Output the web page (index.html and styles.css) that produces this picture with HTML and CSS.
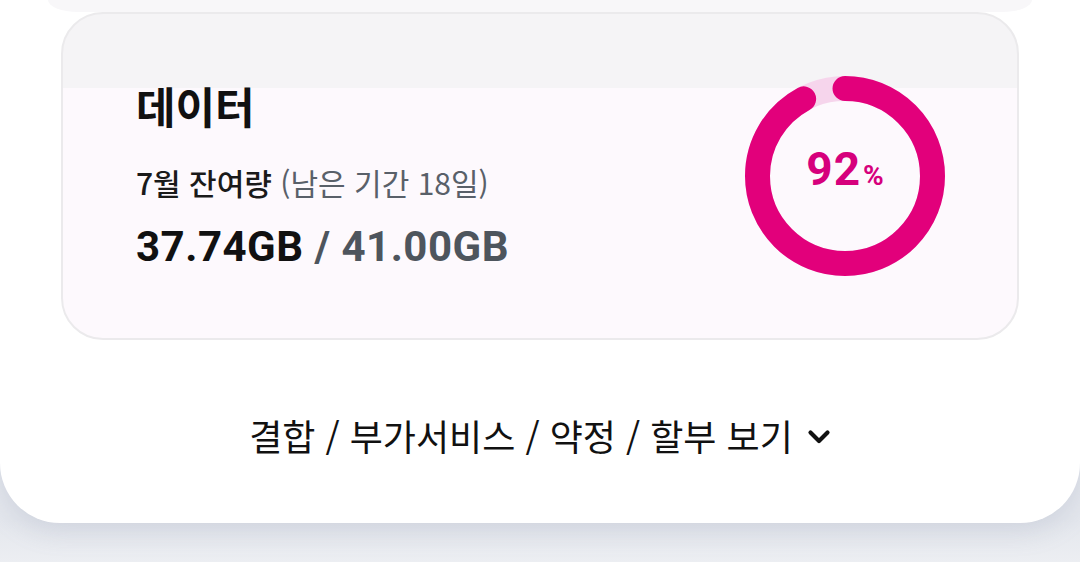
FILE: index.html
```html
<!DOCTYPE html>
<html lang="ko">
<head>
<meta charset="utf-8">
<title>데이터</title>
<link rel="stylesheet" href="styles.css">
</head>
<body>
  <div class="sheet">
    <div class="top-fade"></div>
    <section class="usage-card">
      <div class="usage-info">
        <h2 class="usage-title">데이터</h2>
        <p class="usage-sub"><span class="month">7월 잔여량</span> <span class="period">(남은 기간 18일)</span></p>
        <p class="usage-amount"><span class="used">37.74GB</span><span class="total"> / 41.00GB</span></p>
      </div>
      <div class="donut">
        <svg class="donut-svg" width="200" height="200" viewBox="0 0 200 200">
          <circle cx="100" cy="100" r="87.5" fill="none" stroke="#f6d5ec" stroke-width="25"/>
          <circle cx="100" cy="100" r="87.5" fill="none" stroke="#e2007b" stroke-width="25" stroke-linecap="round" stroke-dasharray="505.8 600" transform="rotate(-90 100 100)"/>
        </svg>
        <div class="donut-label"><span class="pct-num">92</span><span class="pct-sign">%</span></div>
      </div>
    </section>
    <div class="more-row">
      <span class="more-text">결합 / 부가서비스 / 약정 / 할부 보기</span>
      <svg class="chevron" width="24" height="16" viewBox="0 0 24 16">
        <polyline points="3.5,3.5 12,12 20.5,3.5" fill="none" stroke="#111" stroke-width="4.2" stroke-linecap="round" stroke-linejoin="round"/>
      </svg>
    </div>
  </div>
</body>
</html>
```
FILE: styles.css
```css
html, body {
  margin: 0;
  padding: 0;
}
body {
  width: 1080px;
  height: 562px;
  overflow: hidden;
  background: linear-gradient(#e4e7ed 520px, #eceef2 562px);
  font-family: "Noto Sans CJK KR", "Noto Sans", sans-serif;
  color: #111;
}
.sheet {
  background: #fff;
  height: 523px;
  border-radius: 0 0 60px 60px;
  box-shadow: 0 8px 26px rgba(130, 142, 168, 0.22);
  display: flex;
  flex-direction: column;
}
.top-fade {
  height: 12px;
  margin: 0 48px;
  background: #f8f7f9;
  border-radius: 0 0 30px 30px / 0 0 12px 12px;
}
.usage-card {
  margin: 0 61px;
  height: 328px;
  box-sizing: border-box;
  border: 2px solid #ebeaec;
  border-radius: 42px;
  background: linear-gradient(#f5f4f6 0, #f5f4f6 74px, #fdf9fd 74px);
  display: flex;
  align-items: center;
  justify-content: space-between;
  padding: 0 72px 0 73px;
}
.usage-info {
  display: flex;
  flex-direction: column;
}
.usage-title {
  margin: 0;
  font-size: 43px;
  line-height: 48px;
  font-weight: 700;
  color: #111;
}
.usage-sub {
  margin: 33px 0 0;
  font-size: 30px;
  line-height: 40px;
}
.month {
  font-weight: 500;
  color: #1a1a1a;
}
.period {
  font-weight: 400;
  color: #596069;
}
.usage-amount {
  margin: 21px 0 0;
  font-family: Roboto, "Noto Sans", sans-serif;
  font-size: 42px;
  line-height: 48px;
  font-weight: 700;
  letter-spacing: 0.5px;
}
.used {
  color: #111;
}
.total {
  color: #4e555d;
}
.donut {
  display: grid;
  width: 200px;
  height: 200px;
}
.donut-svg,
.donut-label {
  grid-area: 1 / 1;
}
.donut-svg {
  display: block;
}
.donut-label {
  place-self: center;
  padding-bottom: 14px;
  color: #d6007c;
  font-family: Roboto, "Noto Sans", sans-serif;
  font-weight: 700;
  display: flex;
  align-items: baseline;
}
.pct-num {
  font-size: 46px;
  letter-spacing: 1px;
  line-height: 1;
}
.pct-sign {
  font-size: 28px;
  line-height: 1;
  margin-left: 2px;
}
.more-row {
  flex: 1;
  display: flex;
  align-items: center;
  justify-content: center;
  padding-top: 6px;
}
.more-text {
  font-size: 36px;
  line-height: 40px;
  font-weight: 400;
  color: #111;
}
.chevron {
  margin-left: 14px;
  margin-top: 4px;
}
```
